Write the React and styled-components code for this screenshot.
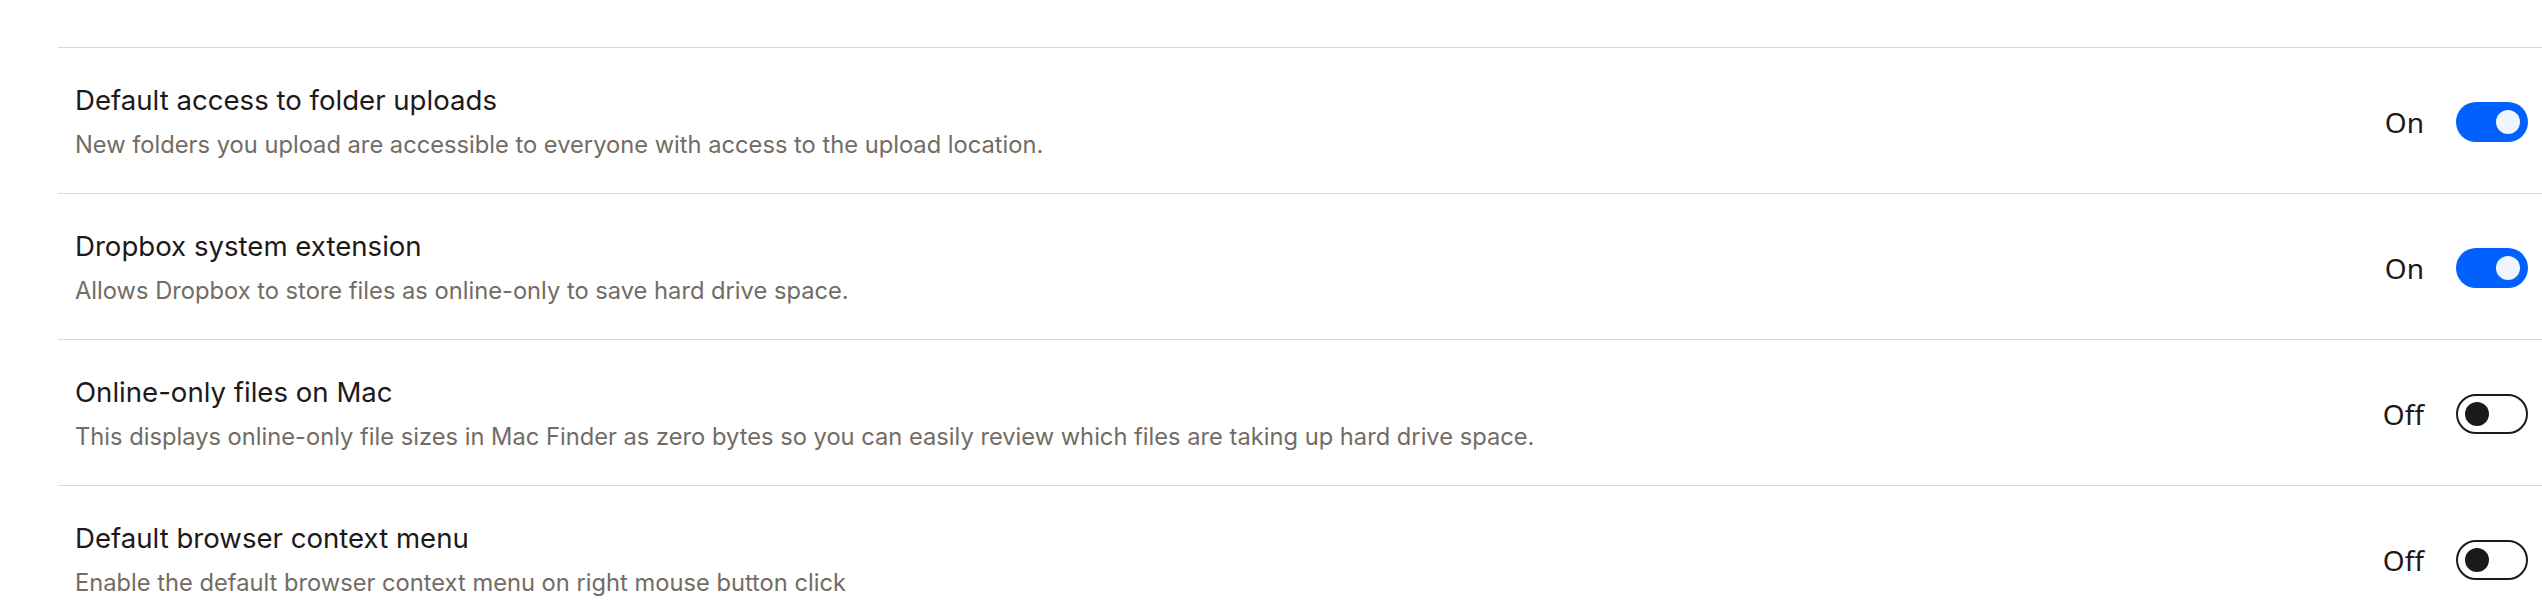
import React from 'react'
import styled, { createGlobalStyle } from 'styled-components'

const GlobalStyle = createGlobalStyle`
    html, body {
        margin: 0;
        padding: 0;
        background: #ffffff;
    }
`

const settings = [
    {
        title: 'Default access to folder uploads',
        description: 'New folders you upload are accessible to everyone with access to the upload location.',
        on: true,
    },
    {
        title: 'Dropbox system extension',
        description: 'Allows Dropbox to store files as online-only to save hard drive space.',
        on: true,
    },
    {
        title: 'Online-only files on Mac',
        description: 'This displays online-only file sizes in Mac Finder as zero bytes so you can easily review which files are taking up hard drive space.',
        on: false,
    },
    {
        title: 'Default browser context menu',
        description: 'Enable the default browser context menu on right mouse button click',
        on: false,
    },
]

const Page = styled.div`
    width: 100%;
    height: 614px;
    overflow: hidden;
    padding: 47px 0 0 58px;
    box-sizing: border-box;
`

const List = styled.div`
    display: flex;
    flex-direction: column;
`

const Row = styled.div`
    display: flex;
    align-items: center;
    justify-content: space-between;
    border-top: 1px solid #dbd9d6;
    padding: 34px 14px 32px 17px;
`

const Details = styled.div`
    display: flex;
    flex-direction: column;
    gap: 11px;
`

const Title = styled.div`
    font-family: Inter, "Liberation Sans", sans-serif;
    font-size: 27.6px;
    line-height: 36px;
    font-weight: 400;
    color: #1e1919;
`

const Description = styled.div`
    font-family: Inter, "Liberation Sans", sans-serif;
    font-size: 23.7px;
    line-height: 32px;
    font-weight: 400;
    color: #736c64;
`

const Control = styled.div`
    display: flex;
    align-items: center;
    gap: 32px;
`

const State = styled.span`
    font-family: "Noto Sans", "Open Sans", sans-serif;
    font-size: 28px;
    color: #1e1919;
`

const Track = styled.div`
    width: 72px;
    height: 40px;
    box-sizing: border-box;
    border-radius: 20px;
    display: flex;
    align-items: center;
    justify-content: ${({ $on }) => ($on ? 'flex-end' : 'flex-start')};
    padding: 0 ${({ $on }) => ($on ? '8px' : '7px')};
    background-color: ${({ $on }) => ($on ? '#0061fe' : '#ffffff')};
    border: ${({ $on }) => ($on ? 'none' : '2px solid #1e1919')};
`

const Knob = styled.span`
    width: 24px;
    height: 24px;
    border-radius: 50%;
    background-color: ${({ $on }) => ($on ? '#f0f4fe' : '#1e1919')};
`

const Toggle = ({ on }) => (
    <Control>
        <State>{on ? 'On' : 'Off'}</State>
        <Track $on={on} role="switch" aria-checked={on}>
            <Knob $on={on} />
        </Track>
    </Control>
)

const App = () => {
    return (
        <Page>
            <GlobalStyle />
            <List>
                {settings.map((s) => (
                    <Row key={s.title}>
                        <Details>
                            <Title>{s.title}</Title>
                            <Description>{s.description}</Description>
                        </Details>
                        <Toggle on={s.on} />
                    </Row>
                ))}
            </List>
        </Page>
    )
}

export default App
